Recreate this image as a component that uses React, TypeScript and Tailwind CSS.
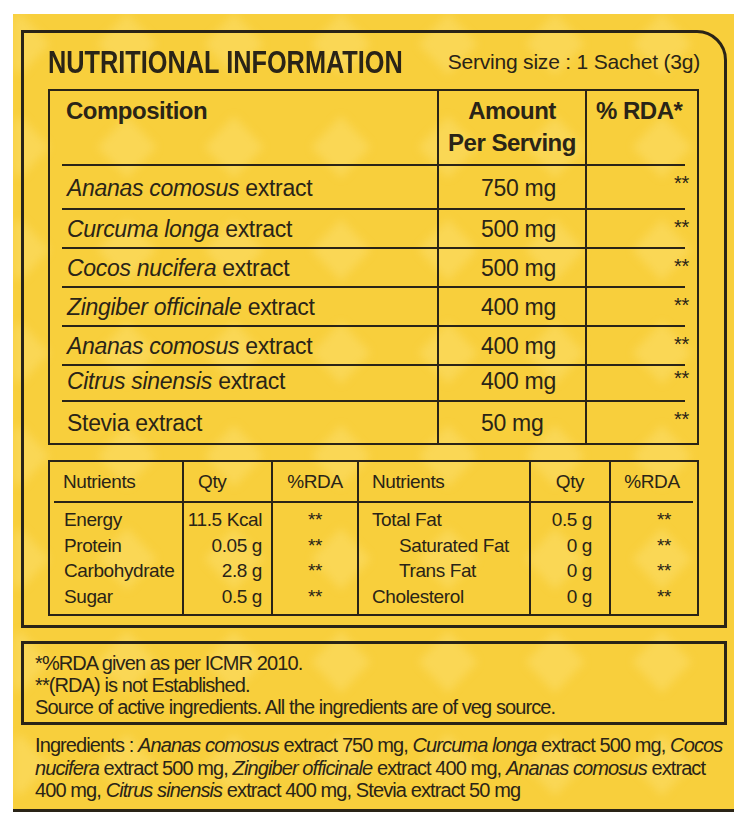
import React from "react";

type CompRow = { latin?: string; plain?: string; amount: string; h: string };

const compRows: CompRow[] = [
  { latin: "Ananas comosus", amount: "750 mg", h: "h-[44px]" },
  { latin: "Curcuma longa", amount: "500 mg", h: "h-[39px]" },
  { latin: "Cocos nucifera", amount: "500 mg", h: "h-[39px]" },
  { latin: "Zingiber officinale", amount: "400 mg", h: "h-[39px]" },
  { latin: "Ananas comosus", amount: "400 mg", h: "h-[34px]" },
  { latin: "Citrus sinensis", amount: "400 mg", h: "h-[41px]" },
  { plain: "Stevia extract", amount: "50 mg", h: "h-[41px]" },
];

const leftNutrients = [
  ["Energy", "11.5 Kcal"],
  ["Protein", "0.05 g"],
  ["Carbohydrate", "2.8 g"],
  ["Sugar", "0.5 g"],
];

const rightNutrients = [
  ["Total Fat", "0.5 g", false],
  ["Saturated Fat", "0 g", true],
  ["Trans Fat", "0 g", true],
  ["Cholesterol", "0 g", false],
] as const;

function Pattern() {
  return (
    <svg className="pointer-events-none absolute inset-0 h-full w-full" aria-hidden>
      <defs>
        <pattern id="dia" width="107" height="103" patternUnits="userSpaceOnUse" x="-46.5" y="-21.5">
          <polygon points="53.5,20.5 83,51.5 53.5,82.5 24,51.5" fill="#fcdf6e" />
        </pattern>
        <filter id="soft">
          <feGaussianBlur stdDeviation="4" />
        </filter>
      </defs>
      <rect width="100%" height="100%" fill="url(#dia)" opacity="0.5" filter="url(#soft)" />
    </svg>
  );
}

function CompositionTable() {
  return (
    <div className="ml-[24px] h-[356px] w-[651px] border-2 border-[#2a2417]">
      {/* header */}
      <div className="grid h-[75px] grid-cols-[387px_150px_110px] text-[24px] font-bold leading-[32px] tracking-[-0.5px]">
        <div className="ml-[12px] border-b-2 border-[#2a2417] pl-[4px] pt-[4px]">Composition</div>
        <div className="border-x-2 border-b-2 border-[#2a2417] pt-[4px] text-center">
          Amount
          <br />
          Per Serving
        </div>
        <div className="mr-[12px] border-b-2 border-[#2a2417] pl-[9px] pt-[4px]">% RDA*</div>
      </div>
      {compRows.map((r, i) => {
        const last = i === compRows.length - 1;
        const line = last ? "" : "border-b-2 border-[#2a2417]";
        return (
          <div key={i} className={`grid grid-cols-[387px_150px_110px] text-[23px] tracking-[-0.3px] ${r.h}`}>
            <div className={`ml-[12px] flex items-center pl-[5px] pt-[2px] ${line}`}>
              {r.latin ? (
                <span>
                  <i>{r.latin}</i> extract
                </span>
              ) : (
                <span>{r.plain}</span>
              )}
            </div>
            <div className={`flex items-center border-x-2 border-[#2a2417] pl-[42px] pt-[2px] ${line}`}>{r.amount}</div>
            <div className={`mr-[12px] ${line}`}>
              <div className="-mr-[4px] pt-[7px] text-right text-[20px] leading-none">**</div>
            </div>
          </div>
        );
      })}
    </div>
  );
}

function NutrientTable() {
  const head = "flex h-[41px] items-center border-b-2 border-[#2a2417] pt-[2px]";
  return (
    <div className="ml-[24px] mt-[15px] flex h-[156px] w-[651px] border-2 border-[#2a2417] text-[19px] tracking-[-0.4px]">
      <div className="w-[132px]">
        <div className={`${head} ml-[4px] pl-[9px]`}>Nutrients</div>
        <div className="pl-[14px] pt-[4px] leading-[25.5px]">
          {leftNutrients.map(([n]) => (
            <div key={n}>{n}</div>
          ))}
        </div>
      </div>
      <div className="w-[89px] border-l-2 border-[#2a2417]">
        <div className={`${head} pl-[14px]`}>Qty</div>
        <div className="pr-[9px] pt-[4px] text-right leading-[25.5px]">
          {leftNutrients.map(([n, q]) => (
            <div key={n}>{q}</div>
          ))}
        </div>
      </div>
      <div className="w-[86px] border-l-2 border-[#2a2417]">
        <div className={`${head} justify-center`}>%RDA</div>
        <div className="pt-[4px] text-center leading-[25.5px]">
          {leftNutrients.map(([n]) => (
            <div key={n}>**</div>
          ))}
        </div>
      </div>
      <div className="w-[172px] border-l-2 border-[#2a2417]">
        <div className={`${head} pl-[13px]`}>Nutrients</div>
        <div className="pl-[13px] pt-[4px] leading-[25.5px]">
          {rightNutrients.map(([n, , indent]) => (
            <div key={n} className={indent ? "pl-[27px]" : ""}>
              {n}
            </div>
          ))}
        </div>
      </div>
      <div className="w-[80px] border-l-2 border-[#2a2417]">
        <div className={`${head} justify-center`}>Qty</div>
        <div className="pr-[17px] pt-[4px] text-right leading-[25.5px]">
          {rightNutrients.map(([n, q]) => (
            <div key={n}>{q}</div>
          ))}
        </div>
      </div>
      <div className="w-[88px] border-l-2 border-[#2a2417]">
        <div className={`${head} mr-[4px] justify-center`}>%RDA</div>
        <div className="pl-[46px] pt-[4px] leading-[25.5px]">
          {rightNutrients.map(([n]) => (
            <div key={n}>**</div>
          ))}
        </div>
      </div>
    </div>
  );
}

export default function App() {
  return (
    <div className="h-[828px] w-[747px] bg-white pl-[13px] pt-[14px] font-['Liberation_Sans',Arial,sans-serif] text-[#2a2417]">
      <div className="relative h-[798px] w-[721px] border-b-[3px] border-[#2a2417] bg-[#f8cf3c]">
        <Pattern />
        <div className="relative pl-[8px] pt-[16px]">
          {/* main bordered panel */}
          <div className="h-[598px] w-[706px] rounded-tr-[30px] border-[3px] border-[#2a2417]">
            <div className="flex h-[56px] items-center justify-between pl-[24px] pr-[24px]">
              <div className="w-[360px] shrink-0">
                <h1 className="mt-[4px] inline-block origin-left scale-x-[0.83] whitespace-nowrap text-[30.5px] font-bold leading-none">
                  NUTRITIONAL INFORMATION
                </h1>
              </div>
              <div className="whitespace-nowrap text-[21px] leading-none tracking-[-0.2px]">Serving size : 1 Sachet (3g)</div>
            </div>
            <CompositionTable />
            <NutrientTable />
          </div>

          {/* footnotes */}
          <div className="mt-[13px] h-[84px] w-[706px] border-[3px] border-[#2a2417] pl-[11px] pt-[8px] text-[20px] leading-[22px] tracking-[-0.9px]">
            <div>*%RDA given as per ICMR 2010.</div>
            <div>**(RDA) is not Established.</div>
            <div>Source of active ingredients. All the ingredients are of veg source.</div>
          </div>

          <div className="mt-[9px] whitespace-nowrap pl-[14px] text-[20px] leading-[22.5px] tracking-[-0.9px]">
            Ingredients : <i>Ananas comosus</i> extract 750 mg, <i>Curcuma longa</i> extract 500 mg, <i>Cocos</i>
            <br />
            <i>nucifera</i> extract 500 mg, <i>Zingiber officinale</i> extract 400 mg, <i>Ananas comosus</i> extract
            <br />
            400 mg, <i>Citrus sinensis</i> extract 400 mg, Stevia extract 50 mg
          </div>
        </div>
      </div>
    </div>
  );
}
